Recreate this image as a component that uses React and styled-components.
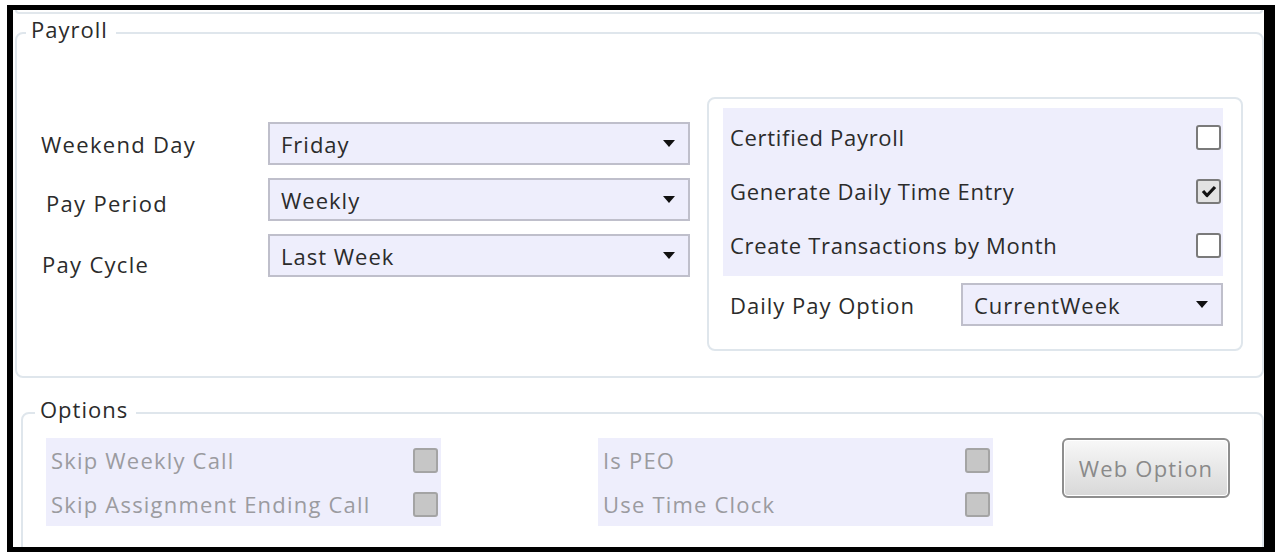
import React from 'react';
import styled, { createGlobalStyle } from 'styled-components';

const GlobalStyle = createGlobalStyle`
  body {
    margin: 0;
    background: #fff;
    font-family: "Open Sans", "Liberation Sans", sans-serif;
  }
`;

const payrollFields = [
  { label: 'Weekend Day', value: 'Friday', indent: 0, drop: 0 },
  { label: 'Pay Period', value: 'Weekly', indent: 5, drop: 6 },
  { label: 'Pay Cycle', value: 'Last Week', indent: 1, drop: 16 },
];

const payrollFlags = [
  { label: 'Certified Payroll', checked: false },
  { label: 'Generate Daily Time Entry', checked: true },
  { label: 'Create Transactions by Month', checked: false },
];

const CheckMark = () => (
  <svg width="16" height="14" viewBox="0 0 16 14">
    <path d="M2 7 L6 11.5 L14 3" fill="none" stroke="#111" strokeWidth="3.2" strokeLinejoin="round" />
  </svg>
);

const Checkbox = ({ checked, disabled }) => (
  <Box $checked={checked} $disabled={disabled}>
    {checked && <CheckMark />}
  </Box>
);

const Combo = ({ value, width }) => (
  <ComboBox $width={width}>
    <span>{value}</span>
    <Arrow />
  </ComboBox>
);

const App = () => {
  return (
    <>
      <GlobalStyle />
      <Frame>
        <PrevEdge />
        <Group $top={3} $left={2} $height={361}>
          <Legend $indent={9}>Payroll</Legend>
          <PayrollBody>
            <FormColumn>
              {payrollFields.map((f) => (
                <FieldRow key={f.label}>
                  <FieldLabel $indent={f.indent} $drop={f.drop}>
                    {f.label}
                  </FieldLabel>
                  <Combo value={f.value} />
                </FieldRow>
              ))}
            </FormColumn>
            <FlagPanel>
              <FlagList>
                {payrollFlags.map((f) => (
                  <FlagRow key={f.label}>
                    <span>{f.label}</span>
                    <Checkbox checked={f.checked} />
                  </FlagRow>
                ))}
              </FlagList>
              <DailyPayRow>
                <span>Daily Pay Option</span>
                <Combo value="CurrentWeek" width={262} />
              </DailyPayRow>
            </FlagPanel>
          </PayrollBody>
        </Group>

        <Group $top={19} $left={8} $height={170}>
          <Legend $indent={12}>Options</Legend>
          <OptionsBody>
            <OptionPanel>
              <OptionRow>
                <span>Skip Weekly Call</span>
                <Checkbox disabled />
              </OptionRow>
              <OptionRow>
                <span>Skip Assignment Ending Call</span>
                <Checkbox disabled />
              </OptionRow>
            </OptionPanel>
            <OptionPanel $offset={157}>
              <OptionRow>
                <span>Is PEO</span>
                <Checkbox disabled />
              </OptionRow>
              <OptionRow>
                <span>Use Time Clock</span>
                <Checkbox disabled />
              </OptionRow>
            </OptionPanel>
            <WebButton disabled>Web Option</WebButton>
          </OptionsBody>
        </Group>
      </Frame>
    </>
  );
};

const Frame = styled.div`
  box-sizing: border-box;
  width: 1268px;
  height: 547px;
  margin: 5px 0 0 7px;
  border-style: solid;
  border-color: #000;
  border-width: 5px 11px 5px 6px;
  background: #fff;
  overflow: hidden;
`;

/* bottom edge of the group above, scrolled off the top */
const PrevEdge = styled.div`
  height: 2px;
  margin: 0 1px 0 2px;
  border: 2px solid #e1e7ec;
  border-top: none;
  border-radius: 0 0 7px 7px;
`;

const Group = styled.fieldset`
  box-sizing: border-box;
  height: ${(p) => p.$height}px;
  margin: ${(p) => p.$top}px 0 0 ${(p) => p.$left}px;
  padding: 0;
  min-width: 0;
  border: 2px solid #dfe6ec;
  border-radius: 8px;
`;

const Legend = styled.legend`
  margin-left: ${(p) => p.$indent}px;
  padding: 0 8px 8px 5px;
  font-size: 22px;
  line-height: 24px;
  letter-spacing: 1px;
  color: #2b2b2b;
`;

const PayrollBody = styled.div`
  display: flex;
  align-items: flex-start;
  padding: 48px 0 0 24px;
`;

const FormColumn = styled.div`
  display: flex;
  flex-direction: column;
  gap: 13px;
  width: 649px;
  margin-top: 25px;
`;

const FieldRow = styled.div`
  display: flex;
  align-items: center;
  height: 43px;
`;

const FieldLabel = styled.span`
  box-sizing: border-box;
  width: 227px;
  padding-left: ${(p) => p.$indent}px;
  margin-top: ${(p) => p.$drop}px;
  font-size: 22px;
  letter-spacing: 1.3px;
  color: #2b2b2b;
`;

const ComboBox = styled.div`
  box-sizing: border-box;
  display: flex;
  align-items: center;
  justify-content: space-between;
  flex: ${(p) => (p.$width ? 'none' : '1')};
  width: ${(p) => (p.$width ? `${p.$width}px` : 'auto')};
  height: 43px;
  padding: 0 13px 0 11px;
  background: #eeeefc;
  border: 2px solid #bfbfcb;
  font-size: 22px;
  letter-spacing: 1px;
  color: #2b2b2b;
`;

const Arrow = styled.span`
  width: 0;
  height: 0;
  border-left: 6px solid transparent;
  border-right: 6px solid transparent;
  border-top: 7px solid #111;
`;

const FlagPanel = styled.div`
  box-sizing: border-box;
  width: 536px;
  height: 254px;
  margin-left: 17px;
  padding: 9px 18px 0 14px;
  border: 2px solid #dfe6ec;
  border-radius: 8px;
`;

const FlagList = styled.div`
  display: flex;
  flex-direction: column;
  height: 168px;
  padding: 2px 2px 0 7px;
  box-sizing: border-box;
  background: #eeeefc;
`;

const FlagRow = styled.div`
  display: flex;
  align-items: center;
  justify-content: space-between;
  height: 54px;
  font-size: 22px;
  letter-spacing: 0.7px;
  color: #2b2b2b;
`;

const DailyPayRow = styled.div`
  display: flex;
  align-items: center;
  justify-content: space-between;
  margin-top: 7px;
  padding-left: 7px;
  font-size: 22px;
  letter-spacing: 1px;
  color: #2b2b2b;
`;

const Box = styled.span`
  box-sizing: border-box;
  display: flex;
  align-items: center;
  justify-content: center;
  width: 25px;
  height: 25px;
  border: 2px solid ${(p) => (p.$disabled ? '#a4a4a4' : '#7a7a7a')};
  border-radius: 3px;
  background: ${(p) => (p.$disabled ? '#c6c6c6' : p.$checked ? '#e2e2e2' : '#fff')};
`;

const OptionsBody = styled.div`
  display: flex;
  align-items: flex-start;
  padding: 9px 0 0 23px;
`;

const OptionPanel = styled.div`
  display: flex;
  flex-direction: column;
  width: 395px;
  height: 88px;
  margin-left: ${(p) => p.$offset || 0}px;
  padding: 0 3px 0 5px;
  box-sizing: border-box;
  background: #eeeefc;
`;

const OptionRow = styled.div`
  display: flex;
  align-items: center;
  justify-content: space-between;
  height: 44px;
  font-size: 22px;
  letter-spacing: 1.2px;
  color: #9b9ba0;
`;

const WebButton = styled.button`
  box-sizing: border-box;
  width: 168px;
  height: 60px;
  margin-left: 69px;
  border: 2px solid #8e8e8e;
  border-radius: 6px;
  background: linear-gradient(#f8f8f8, #e6e6e6 55%, #d8d8d8);
  box-shadow: inset 0 0 0 1px #fff;
  font-family: "Open Sans", "Liberation Sans", sans-serif;
  font-size: 22px;
  letter-spacing: 1.2px;
  color: #8a8a8a;
`;

export default App;
